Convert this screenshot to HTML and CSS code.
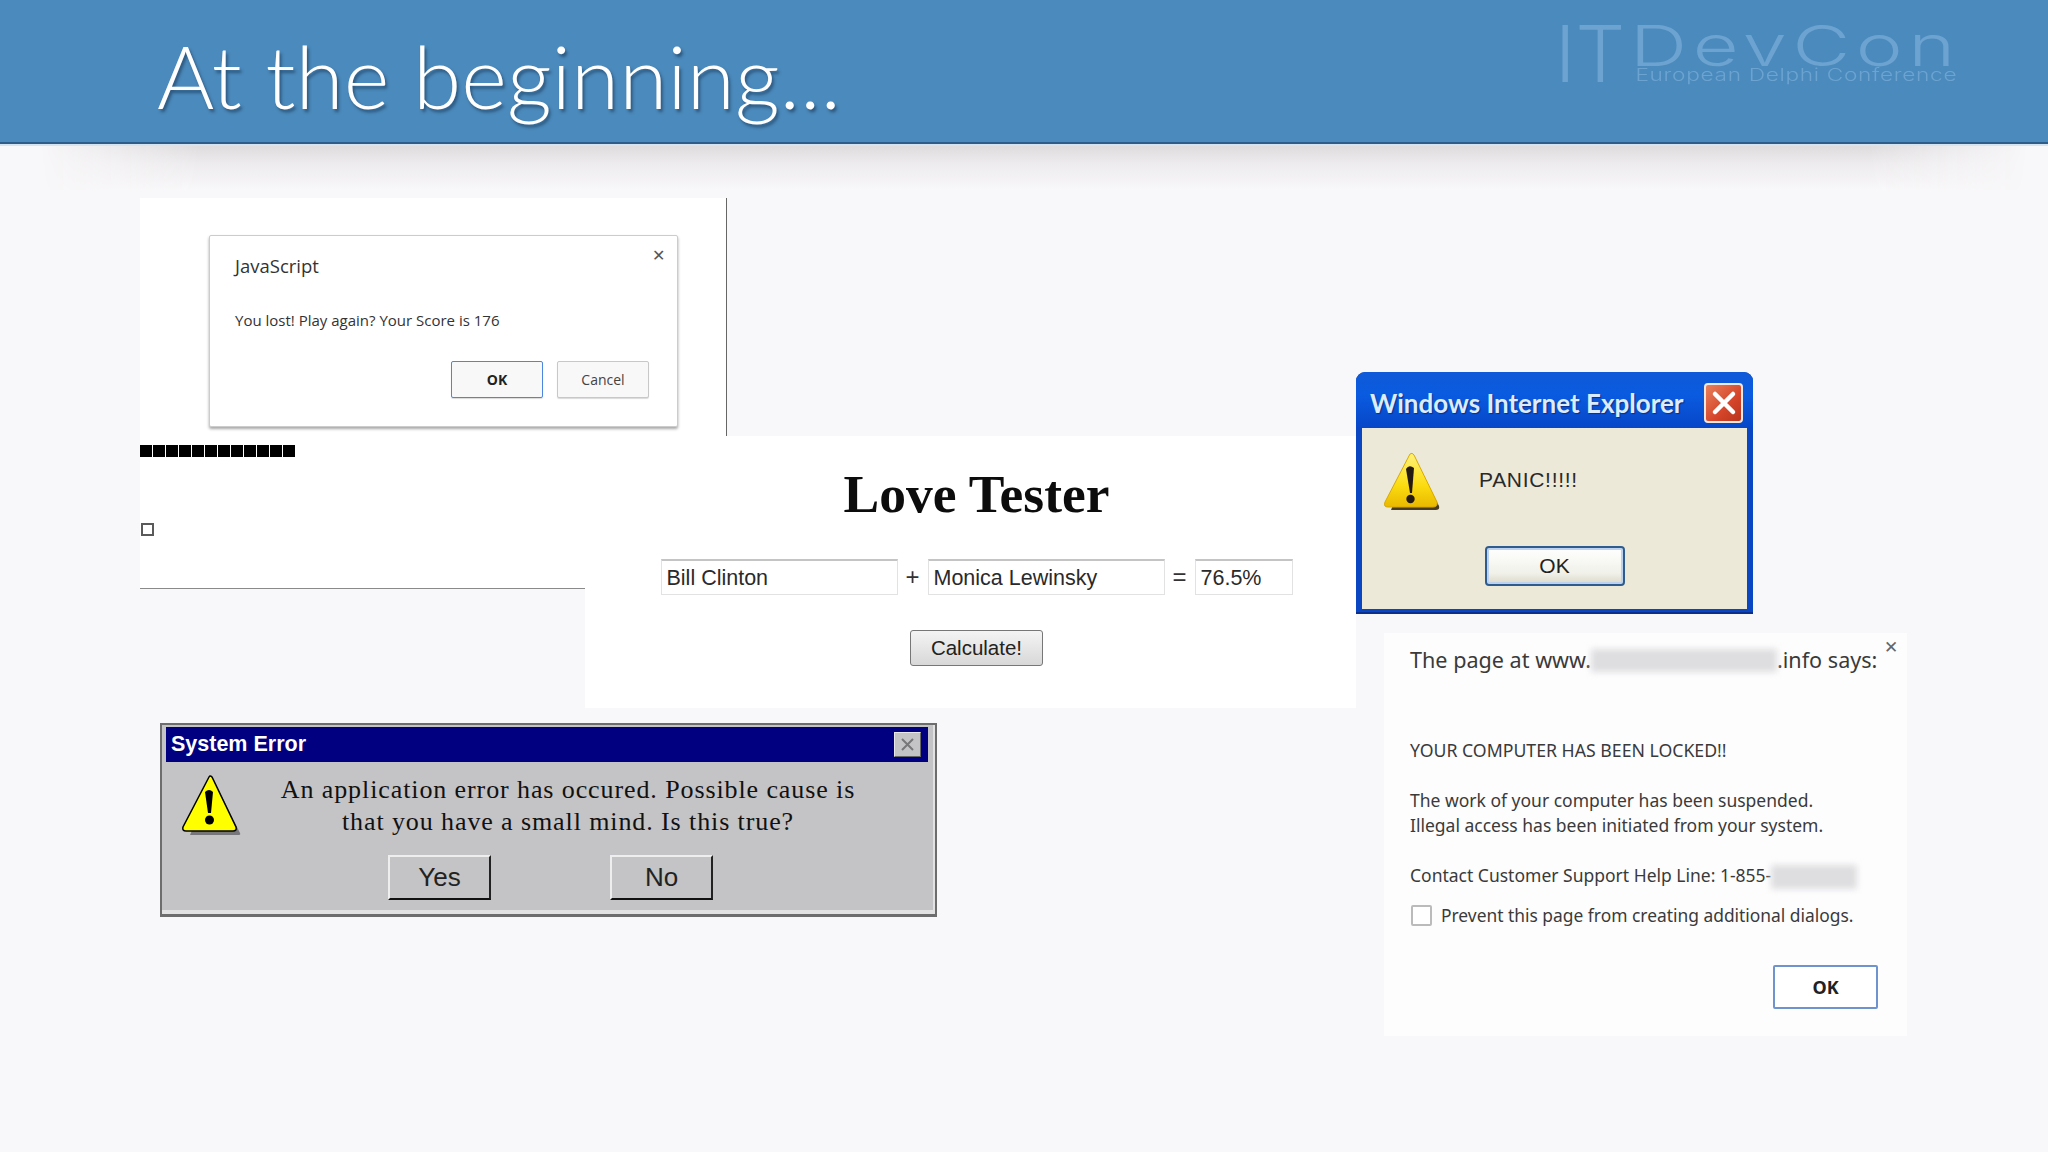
FILE: index.html
```html
<!DOCTYPE html>
<html lang="en">
<head>
    <meta charset="UTF-8">
    <title>At the beginning...</title>
    <link rel="stylesheet" href="styles.css">
</head>
<body>
    <div class="slide">
        <header class="slide-header">
            <h1>At the beginning...</h1>
            <div class="logo">
                <span class="logo-it">IT</span>
                <div class="logo-right">
                    <span class="logo-name">DevCon</span>
                    <span class="logo-sub">European Delphi Conference</span>
                </div>
            </div>
        </header>

        <!-- browser page behind the JavaScript alert -->
        <div class="page-top">
            <div class="js-dialog">
                <span class="js-close">✕</span>
                <div class="js-title">JavaScript</div>
                <div class="js-message">You lost! Play again? Your Score is 176</div>
                <div class="js-actions">
                    <button class="js-btn js-btn-primary">OK</button>
                    <button class="js-btn">Cancel</button>
                </div>
            </div>
        </div>
        <div class="page-bottom">
            <div class="black-squares"></div>
            <div class="small-square"></div>
        </div>

        <!-- love tester -->
        <div class="love-tester">
            <h2>Love Tester</h2>
            <div class="love-row">
                <div class="love-input love-input-wide">Bill Clinton</div>
                <span class="love-op">+</span>
                <div class="love-input love-input-wide">Monica Lewinsky</div>
                <span class="love-op">=</span>
                <div class="love-input love-input-small">76.5%</div>
            </div>
            <button class="love-btn">Calculate!</button>
        </div>

        <!-- XP dialog -->
        <div class="xp-dialog">
            <div class="xp-titlebar">
                <span>Windows Internet Explorer</span>
                <div class="xp-close">
                    <svg width="26" height="26" viewBox="0 0 26 26">
                        <path d="M4 4 L22 22 M22 4 L4 22" stroke="#fff" stroke-width="4.5" stroke-linecap="round"/>
                    </svg>
                </div>
            </div>
            <div class="xp-body">
                <div class="xp-content">
                    <svg class="xp-icon" width="58" height="60" viewBox="0 0 58 60">
                        <defs>
                            <linearGradient id="xpYellow" x1="0" y1="0" x2="0" y2="1">
                                <stop offset="0" stop-color="#fff27a"/>
                                <stop offset="0.6" stop-color="#fbdc10"/>
                                <stop offset="1" stop-color="#e9b800"/>
                            </linearGradient>
                        </defs>
                        <path d="M30 5 L56 54 Q57 58 53 58 L8 58 Z" fill="#4a3c20"/>
                        <path d="M27 2 Q29 0 31 3 L54 50 Q55 55 50 55 L5 55 Q0 55 2 50 Z" fill="url(#xpYellow)" stroke="#d9a900" stroke-width="1"/>
                        <path d="M23 17 Q26 12 31 16 L29 41 L27 41 Z" fill="#241a12"/>
                        <circle cx="27.5" cy="47" r="4.2" fill="#241a12"/>
                    </svg>
                    <span class="xp-text">PANIC!!!!!</span>
                </div>
                <button class="xp-btn">OK</button>
            </div>
        </div>

        <!-- locked computer dialog -->
        <div class="locked-dialog">
            <span class="locked-close">✕</span>
            <div class="locked-title">The page at www.<span class="blur-box blur-site"></span>.info says:</div>
            <p class="locked-line locked-head">YOUR COMPUTER HAS BEEN LOCKED!!</p>
            <p class="locked-line locked-para">The work of your computer has been suspended.<br>Illegal access has been initiated from your system.</p>
            <p class="locked-line locked-para">Contact Customer Support Help Line: 1-855-<span class="blur-box blur-phone"></span></p>
            <div class="locked-check">
                <span class="checkbox"></span>
                <span>Prevent this page from creating additional dialogs.</span>
            </div>
            <div class="locked-actions">
                <button class="locked-btn">OK</button>
            </div>
        </div>

        <!-- win95 dialog -->
        <div class="sys-dialog">
            <div class="sys-titlebar">
                <span>System Error</span>
                <div class="sys-close">
                    <svg width="15" height="15" viewBox="0 0 15 15">
                        <path d="M2 2 L13 13 M13 2 L2 13" stroke="#77777a" stroke-width="2"/>
                    </svg>
                </div>
            </div>
            <div class="sys-body">
                <svg class="sys-icon" width="60" height="61" viewBox="0 0 60 61">
                    <path d="M32 6 L58 58 Q59 60 56 60 L8 60 Z" fill="#77767a"/>
                    <path d="M27 2 Q28 0 30 2 L54 52 Q55 56 51 56 L4 56 Q0 56 1 52 Z" fill="#ffff00" stroke="#000" stroke-width="1.5"/>
                    <path d="M23 17 Q27 13 31 17 L29 38 L26 38 Z" fill="#000"/>
                    <circle cx="27.5" cy="45" r="4.5" fill="#000"/>
                </svg>
                <p class="sys-text">An application error has occured. Possible cause is<br>that you have a small mind. Is this true?</p>
                <div class="sys-actions">
                    <button class="sys-btn">Yes</button>
                    <button class="sys-btn">No</button>
                </div>
            </div>
        </div>
    </div>
</body>
</html>
```

FILE: styles.css
```css
* {
    margin: 0;
    padding: 0;
    box-sizing: border-box;
}

body {
    width: 2048px;
    height: 1152px;
    overflow: hidden;
    background: #f8f7f9;
    font-family: 'Liberation Sans', Arial, sans-serif;
}

button {
    font-family: inherit;
    display: flex;
    align-items: center;
    justify-content: center;
}

.slide {
    position: relative;
    width: 2048px;
    height: 1152px;
}

/* header */

.slide-header {
    position: relative;
    height: 146px;
    padding-left: 157px;
    background: #4b8abc;
    border-bottom: 2px solid #d6e4f0;
    box-shadow: inset 0 -2px 0 #2f5d8a;
    display: flex;
    justify-content: space-between;
}

.slide-header::after {
    content: '';
    position: absolute;
    left: 40px;
    right: 20px;
    top: 146px;
    height: 44px;
    background: linear-gradient(180deg, #dfdcde 0%, #edebed 40%, #f8f7f9 100%);
    -webkit-mask-image: linear-gradient(90deg, transparent 0, #000 8%, #000 92%, transparent 100%);
    mask-image: linear-gradient(90deg, transparent 0, #000 8%, #000 92%, transparent 100%);
}

.slide-header h1 {
    font-family: 'Lato', sans-serif;
    font-weight: 300;
    font-size: 87.5px;
    line-height: 100px;
    margin-top: 26px;
    color: #fff;
    text-shadow: 2px 3px 3px rgba(20, 50, 80, 0.55);
}

.logo {
    display: flex;
    gap: 10px;
    margin: 25px 91px 0 0;
    color: #6ca3d1;
    height: 57px;
}

.logo-it {
    font-family: 'Inter', sans-serif;
    font-weight: 300;
    font-size: 78px;
    line-height: 57px;
}

.logo-right {
    width: 322px;
    display: flex;
    flex-direction: column;
    align-items: flex-end;
}

.logo-name {
    font-family: 'Inter', sans-serif;
    font-weight: 300;
    font-size: 56px;
    line-height: 43px;
    letter-spacing: 4px;
    margin-right: -4px;
    transform: scaleX(1.415);
    transform-origin: right center;
}

.logo-sub {
    font-family: 'Inter', sans-serif;
    font-weight: 300;
    font-size: 17px;
    line-height: 14px;
    letter-spacing: 0.5px;
    white-space: nowrap;
    transform: scaleX(1.334);
    transform-origin: right center;
}

/* page behind the js alert */

.page-top {
    position: absolute;
    left: 140px;
    top: 198px;
    width: 587px;
    height: 238px;
    padding: 37px 0 0 69px;
    background: #fff;
    border-right: 1px solid #666;
}

.js-dialog {
    position: relative;
    width: 469px;
    height: 192px;
    padding: 18px 28px 0 25px;
    background: #fff;
    border: 1px solid #ccc;
    border-radius: 2px;
    box-shadow: 0 2px 3px rgba(0, 0, 0, 0.35);
    font-family: 'Open Sans', sans-serif;
    color: #333;
}

.js-close {
    position: absolute;
    top: 10px;
    right: 12px;
    font-size: 16px;
    line-height: 18px;
    color: #555;
}

.js-title {
    font-size: 18.5px;
    line-height: 24px;
}

.js-message {
    font-size: 15px;
    line-height: 20px;
    margin-top: 32px;
    white-space: nowrap;
}

.js-actions {
    display: flex;
    justify-content: flex-end;
    gap: 14px;
    margin-top: 31px;
}

.js-btn {
    width: 92px;
    height: 37px;
    font-size: 14px;
    color: #444;
    background: #f8f8f8;
    border: 1px solid #c8c8c8;
    border-radius: 2px;
    box-shadow: 0 1px 1px rgba(0, 0, 0, 0.15);
}

.js-btn-primary {
    font-weight: 700;
    color: #222;
    border-color: #4d86e0;
}

.page-bottom {
    position: absolute;
    left: 140px;
    top: 436px;
    width: 445px;
    height: 153px;
    padding-top: 9px;
    background: #fff;
    border-bottom: 1px solid #8a8a8a;
}

.black-squares {
    width: 156px;
    height: 12px;
    background: repeating-linear-gradient(90deg, #000 0, #000 12px, #fff 12px, #fff 13px);
}

.small-square {
    width: 13px;
    height: 13px;
    margin: 66px 0 0 1px;
    border: 2px solid #5a5a5a;
}

/* love tester */

.love-tester {
    position: absolute;
    left: 585px;
    top: 436px;
    width: 771px;
    height: 272px;
    background: #fff;
    display: flex;
    flex-direction: column;
    align-items: center;
    padding: 28px 0 0 12px;
}

.love-tester h2 {
    font-family: 'Liberation Serif', serif;
    font-size: 53.5px;
    line-height: 60px;
    color: #0c0c0c;
}

.love-row {
    display: flex;
    align-items: center;
    margin-top: 35px;
    height: 36px;
}

.love-input {
    height: 36px;
    line-height: 34px;
    padding-left: 5px;
    font-size: 21.5px;
    color: #2a2a2a;
    border: 1px solid #e2e2e2;
    border-top: 2px solid #c4c4c4;
    background: #fff;
}

.love-input-wide {
    width: 237px;
}

.love-input-small {
    width: 98px;
}

.love-op {
    width: 30px;
    text-align: center;
    font-size: 24px;
    color: #333;
}

.love-btn {
    width: 133px;
    height: 36px;
    margin-top: 35px;
    font-size: 20.5px;
    color: #222;
    background: linear-gradient(180deg, #f4f4f4 0%, #d8d8d8 100%);
    border: 1px solid #777;
    border-radius: 3px;
}

/* xp dialog */

.xp-dialog {
    position: absolute;
    left: 1356px;
    top: 372px;
    width: 397px;
    height: 242px;
    background: #0a46c2;
    border-radius: 9px 9px 0 0;
    box-shadow: inset 0 -2px 0 #0a2f8c;
    padding: 0 6px 5px;
    display: flex;
    flex-direction: column;
}

.xp-titlebar {
    height: 56px;
    margin: 0 -6px;
    padding: 0 10px 0 14px;
    border-radius: 9px 9px 0 0;
    background: linear-gradient(180deg, #0f5ad8 0%, #0a5be0 40%, #0746c8 100%);
    display: flex;
    align-items: center;
    justify-content: space-between;
    font-family: 'Lato', sans-serif;
    font-weight: 700;
    font-size: 26px;
    white-space: nowrap;
    color: #dcecff;
    text-shadow: 1px 1px 1px #0a2f8c;
}

.xp-titlebar span {
    margin-top: 5px;
}

.xp-close {
    width: 39px;
    height: 40px;
    margin-top: 6px;
    background: linear-gradient(135deg, #e8805c 0%, #d5452a 60%, #b8341c 100%);
    border: 2px solid #f0e8e0;
    border-radius: 4px;
    display: flex;
    align-items: center;
    justify-content: center;
}

.xp-body {
    flex: 1;
    background: #ece9d8;
    display: flex;
    flex-direction: column;
    align-items: center;
}

.xp-content {
    align-self: stretch;
    display: flex;
    align-items: flex-start;
    padding: 24px 0 0 21px;
    height: 118px;
}

.xp-text {
    margin: 16px 0 0 38px;
    font-size: 21px;
    line-height: 24px;
    letter-spacing: 0.7px;
    color: #2a2a2a;
}

.xp-btn {
    width: 140px;
    height: 40px;
    font-size: 21px;
    color: #222;
    background: linear-gradient(180deg, #fff 0%, #f1f1ea 70%, #dcd8c8 100%);
    border: 2px solid #2f5c8e;
    border-radius: 4px;
    box-shadow: inset 0 0 0 2px #bcd2ee;
}

/* locked dialog */

.locked-dialog {
    position: absolute;
    left: 1384px;
    top: 633px;
    width: 523px;
    height: 403px;
    padding: 12px 29px 0 26px;
    background: #fdfdfe;
    font-family: 'Noto Sans', sans-serif;
    color: #3a3a3a;
}

.locked-close {
    position: absolute;
    top: 5px;
    right: 9px;
    font-size: 17px;
    line-height: 18px;
    color: #666;
}

.locked-title {
    font-size: 21.6px;
    line-height: 30px;
    white-space: nowrap;
    display: flex;
    align-items: center;
}

.blur-box {
    display: inline-block;
    background: #dedee0;
    filter: blur(3px);
}

.blur-site {
    width: 186px;
    height: 23px;
}

.blur-phone {
    width: 86px;
    height: 24px;
    vertical-align: middle;
}

.locked-line {
    font-size: 17.5px;
    line-height: 25px;
    white-space: nowrap;
}

.locked-head {
    margin-top: 63px;
    font-size: 17.7px;
}

.locked-para {
    margin-top: 25px;
}

.locked-check {
    display: flex;
    align-items: center;
    gap: 9px;
    margin-top: 14px;
    font-size: 17.4px;
    line-height: 25px;
    white-space: nowrap;
}

.checkbox {
    width: 21px;
    height: 21px;
    margin-left: 1px;
    border: 2px solid #bbb;
    border-radius: 2px;
    background: #fff;
}

.locked-actions {
    display: flex;
    justify-content: flex-end;
    margin-top: 37px;
}

.locked-btn {
    width: 105px;
    height: 44px;
    font-family: 'Noto Sans', sans-serif;
    font-weight: 700;
    font-size: 18px;
    color: #222;
    background: #fff;
    border: 2px solid #6f93cf;
    border-radius: 2px;
}

/* win95 dialog */

.sys-dialog {
    position: absolute;
    left: 160px;
    top: 723px;
    width: 777px;
    height: 194px;
    padding: 2px 7px 0 4px;
    background: #c4c3c5;
    border: 2px solid #6d6d6d;
    border-bottom-width: 3px;
    box-shadow: inset -2px -4px 0 #e2e2e2;
    display: flex;
    flex-direction: column;
}

.sys-titlebar {
    height: 35px;
    padding: 0 7px 0 5px;
    background: #000080;
    color: #fff;
    font-weight: 700;
    font-size: 21.5px;
    display: flex;
    align-items: center;
    justify-content: space-between;
}

.sys-close {
    width: 27px;
    height: 25px;
    background: #c4c3c5;
    border: 1px solid #e8e8e8;
    border-right-color: #666;
    border-bottom-color: #666;
    display: flex;
    align-items: center;
    justify-content: center;
}

.sys-body {
    position: relative;
    flex: 1;
    display: flex;
    flex-direction: column;
    align-items: center;
}

.sys-icon {
    position: absolute;
    left: 16px;
    top: 13px;
}

.sys-text {
    margin: 12px 0 0 42px;
    text-align: center;
    font-family: 'Liberation Serif', serif;
    font-size: 26px;
    line-height: 32px;
    letter-spacing: 0.9px;
    color: #111;
    white-space: nowrap;
}

.sys-actions {
    display: flex;
    gap: 119px;
    margin: 17px 0 0 7px;
}

.sys-btn {
    width: 103px;
    height: 45px;
    font-size: 26px;
    color: #222;
    background: #c4c3c5;
    border: 2px solid #eee;
    border-right-color: #222;
    border-bottom-color: #111;
}
```
